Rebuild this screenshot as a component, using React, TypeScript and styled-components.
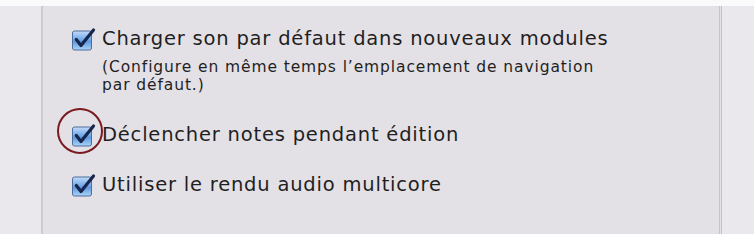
import React from "react";
import styled, { createGlobalStyle } from "styled-components";

const Global = createGlobalStyle`
  html, body { margin: 0; padding: 0; }
  body {
    width: 754px;
    height: 234px;
    overflow: hidden;
    background: #ebe9ed;
    font-family: "DejaVu Sans", "Liberation Sans", sans-serif;
  }
`;

const Window = styled.div`
  width: 754px;
  height: 234px;
  display: flex;
  flex-direction: column;
`;

const TopStrip = styled.div`
  height: 6px;
  background: #fafafa;
  flex: none;
`;

const Body = styled.div`
  flex: 1;
  display: grid;
  grid-template-columns: 41px 681px 1fr;
  background: #ebe9ed;
`;

const Side = styled.div`
  background: #eae8ec;
`;

const Panel = styled.div`
  background: #e4e1e6;
  border-left: 2px solid #cdcbd0;
  border-right: 3px double #c5c3c8;
  padding: 21px 0 0 29px;
  display: flex;
  flex-direction: column;
`;

const Option = styled.label<{ $gap?: number }>`
  display: flex;
  align-items: center;
  gap: 5px;
  margin-top: ${(p) => p.$gap ?? 0}px;
  font-size: 19.5px;
  letter-spacing: 0.8px;
  color: #1f1f1f;
  line-height: 24px;
  position: relative;
`;

const Note = styled.div`
  font-size: 15.5px;
  letter-spacing: 0.9px;
  line-height: 18px;
  color: #1f1f1f;
  padding-left: 30px;
  margin-top: 7px;
  width: 500px;
`;

const BoxWrap = styled.span`
  position: relative;
  width: 25px;
  height: 24px;
  flex: none;
  display: inline-block;
`;

const Ring = styled.span`
  position: absolute;
  left: -15px;
  top: -15px;
  width: 46px;
  height: 46px;
  border: 2.5px solid #7a1a1f;
  border-radius: 50%;
  box-sizing: border-box;
`;

function CheckBox({ ringed }: { ringed?: boolean }) {
  return (
    <BoxWrap>
      <svg width="25" height="24" viewBox="0 0 25 24">
        <defs>
          <linearGradient id="cbg" x1="0" y1="0" x2="0" y2="1">
            <stop offset="0" stopColor="#c3dcf8" />
            <stop offset="0.45" stopColor="#73a9ea" />
            <stop offset="0.55" stopColor="#5e98e0" />
            <stop offset="1" stopColor="#acd4f8" />
          </linearGradient>
        </defs>
        <rect x="0.5" y="4" width="19" height="19" rx="2" fill="url(#cbg)" stroke="#4d6d9c" strokeWidth="1" />
        <path d="M4.3 12.5 L9 18.5 L21.5 3" fill="none" stroke="#17264c" strokeWidth="3.2" strokeLinecap="round" strokeLinejoin="round" />
      </svg>
      {ringed && <Ring />}
    </BoxWrap>
  );
}

export default function App() {
  return (
    <>
      <Global />
      <Window>
        <TopStrip />
        <Body>
          <Side />
          <Panel>
            <Option>
              <CheckBox />
              Charger son par défaut dans nouveaux modules
            </Option>
            <Note>
              (Configure en même temps l’emplacement de navigation par défaut.)
            </Note>
            <Option $gap={29}>
              <CheckBox ringed />
              Déclencher notes pendant édition
            </Option>
            <Option $gap={26}>
              <CheckBox />
              Utiliser le rendu audio multicore
            </Option>
          </Panel>
          <Side />
        </Body>
      </Window>
    </>
  );
}
